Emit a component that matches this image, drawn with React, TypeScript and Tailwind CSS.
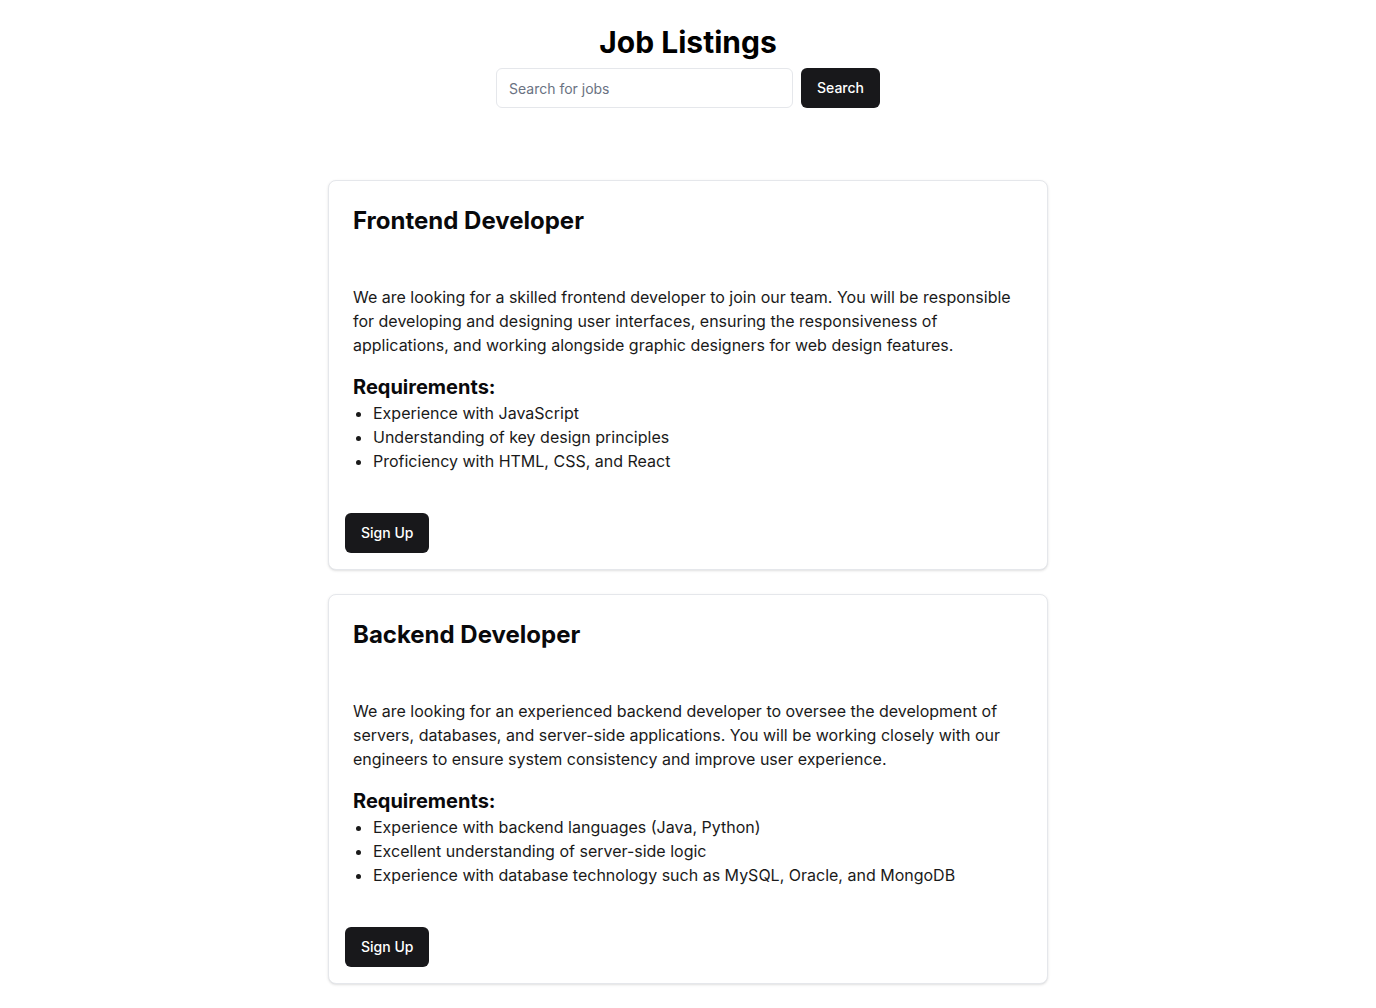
import React from 'react';

interface Job {
  title: string;
  description: string;
  requirements: string[];
}

const jobs: Job[] = [
  {
    title: 'Frontend Developer',
    description:
      'We are looking for a skilled frontend developer to join our team. You will be responsible for developing and designing user interfaces, ensuring the responsiveness of applications, and working alongside graphic designers for web design features.',
    requirements: [
      'Experience with JavaScript',
      'Understanding of key design principles',
      'Proficiency with HTML, CSS, and React',
    ],
  },
  {
    title: 'Backend Developer',
    description:
      'We are looking for an experienced backend developer to oversee the development of servers, databases, and server-side applications. You will be working closely with our engineers to ensure system consistency and improve user experience.',
    requirements: [
      'Experience with backend languages (Java, Python)',
      'Excellent understanding of server-side logic',
      'Experience with database technology such as MySQL, Oracle, and MongoDB',
    ],
  },
];

function JobCard({ job }: { job: Job }) {
  return (
    <div className="rounded-lg border border-gray-200 bg-white shadow-sm">
      {/* Header */}
      <div className="p-6 pb-12">
        <h2 className="text-2xl font-bold leading-8 text-[#09090b]">{job.title}</h2>
      </div>
      {/* Content */}
      <div className="px-6 pb-6">
        <p className="text-base leading-6 text-[#1a1a1a]">{job.description}</p>
        <h3 className="mt-4 text-xl font-bold leading-7 text-[#09090b]">Requirements:</h3>
        <ul className="list-disc pl-5 text-base leading-6 text-[#1a1a1a]">
          {job.requirements.map((r) => (
            <li key={r}>{r}</li>
          ))}
        </ul>
      </div>
      {/* Footer */}
      <div className="p-4">
        <button className="h-10 rounded-md bg-[#18181b] px-4 text-sm font-medium text-white">Sign Up</button>
      </div>
    </div>
  );
}

export default function App() {
  return (
    <div className="min-h-screen bg-white pt-6 pb-6 font-['Inter',sans-serif]">
      <div className="flex flex-col items-center">
        <h1 className="text-3xl font-bold leading-9 text-black">Job Listings</h1>
        <div className="mt-2 flex items-center gap-2">
          <input
            type="text"
            placeholder="Search for jobs"
            className="h-10 w-[297px] rounded-md border border-gray-200 bg-white px-3 text-sm text-[#09090b] placeholder:text-gray-500 outline-none"
          />
          <button className="h-10 rounded-md bg-[#18181b] px-4 text-sm font-medium text-white">Search</button>
        </div>
      </div>

      <div className="mx-auto mt-[72px] flex w-[720px] flex-col gap-6">
        {jobs.map((job) => (
          <JobCard key={job.title} job={job} />
        ))}
      </div>
    </div>
  );
}
